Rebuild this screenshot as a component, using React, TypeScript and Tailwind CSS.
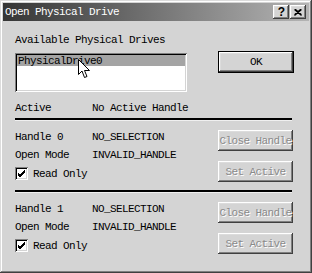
import React from "react";

const font = "font-['Liberation_Mono',monospace] text-[11px] tracking-[-0.6px] leading-[12px]";

const raised =
  "shadow-[inset_-1px_-1px_#404040,inset_1px_1px_#ffffff,inset_-2px_-2px_#808080,inset_2px_2px_#dcdcdc]";

const DisabledButton = ({ label, className = "" }: { label: string; className?: string }) => (
  <div
    className={`w-[75px] h-[21px] bg-[#d4d4d4] ${raised} flex items-center justify-center overflow-hidden whitespace-nowrap text-[#8a8a8a] [text-shadow:1px_1px_0_#ffffff] ${className}`}
  >
    {label}
  </div>
);

const CheckBox = () => (
  <div className="w-[13px] h-[13px] bg-white shadow-[inset_1px_1px_#808080,inset_-1px_-1px_#ffffff,inset_2px_2px_#000000,inset_-2px_-2px_#d4d4d4] flex items-center justify-center">
    <svg width="9" height="9" viewBox="0 0 9 9">
      <path d="M1 4 L3 6 L8 1 M1 5 L3 7 L8 2 M1 6 L3 8 L8 3" stroke="#000" strokeWidth="1" fill="none" />
    </svg>
  </div>
);

const HandleGroup = ({ index }: { index: number }) => (
  <div className="flex">
    <div className="flex flex-col pt-[10px]">
      <div className="flex">
        <span className="w-[77px]">Handle {index}</span>
        <span>NO_SELECTION</span>
      </div>
      <div className="flex mt-[6px]">
        <span className="w-[77px]">Open Mode</span>
        <span>INVALID_HANDLE</span>
      </div>
      <div className="flex items-center mt-[6px]">
        <CheckBox />
        <span className="ml-[5px]">Read Only</span>
      </div>
    </div>
    <div className="ml-auto mr-[16px] flex flex-col pt-[9px]">
      <DisabledButton label="Close Handle" />
      <DisabledButton label="Set Active" className="mt-[10px]" />
    </div>
  </div>
);

const App = () => {
  return (
    <div
      className={`relative w-[312px] h-[273px] bg-[#d4d4d4] p-[3px] text-black ${font} shadow-[inset_-1px_-1px_#404040,inset_1px_1px_#dcdcdc,inset_-2px_-2px_#808080,inset_2px_2px_#ffffff]`}
    >
      <div className="h-[18px] flex items-center pl-[2px] pr-[3px] bg-[linear-gradient(to_right,#353535,#b4b4b4)]">
        <span className="text-white">Open Physical Drive</span>
        <div className="ml-auto flex">
          <div className={`w-[16px] h-[14px] bg-[#d4d4d4] ${raised} flex items-center justify-center font-bold text-[12px] font-['Liberation_Sans',sans-serif]`}>
            ?
          </div>
          <div className={`ml-[1px] w-[16px] h-[14px] bg-[#d4d4d4] ${raised} flex items-center justify-center`}>
            <svg width="8" height="7" viewBox="0 0 8 7">
              <path d="M0.5 0.5 L7.5 6.5 M7.5 0.5 L0.5 6.5 M1.5 0.5 L7.5 5.8 M6.5 0.5 L0.5 5.8" stroke="#000" strokeWidth="1.2" fill="none" />
            </svg>
          </div>
        </div>
      </div>

      <div className="pl-[12px]">
        <div className="mt-[13px]">Available Physical Drives</div>

        <div className="flex items-start mt-[5px]">
          <div className="mt-[2px] w-[172px] h-[39px] bg-white shadow-[inset_1px_1px_#808080,inset_-1px_-1px_#ffffff,inset_2px_2px_#000000,inset_-2px_-2px_#d4d4d4] p-[2px]">
            <div className="h-[11px] bg-[#a4a4a4] flex items-center pl-[1px]">PhysicalDrive0</div>
          </div>
          <div className="ml-[31px] w-[76px] h-[22px] border border-black">
            <div className={`w-full h-full bg-[#d4d4d4] ${raised} flex items-center justify-center`}>OK</div>
          </div>
        </div>

        <div className="flex mt-[10px]">
          <span className="w-[77px]">Active</span>
          <span>No Active Handle</span>
        </div>

        <div className="mt-[4px] w-[277px] h-[3px] border-t-2 border-black border-b border-b-[#f0f0f0]" />
        <HandleGroup index={0} />

        <div className="mt-[8px] w-[277px] h-[3px] border-t-2 border-black border-b border-b-[#f0f0f0]" />
        <HandleGroup index={1} />
      </div>

      <svg className="absolute left-[78px] top-[59px]" width="12" height="20" viewBox="0 0 12 20">
        <path d="M0.5 0.5 L0.5 15.5 L4 12 L6.5 18.5 L9 17.5 L6.5 11.5 L11.5 11.5 Z" fill="#fff" stroke="#000" strokeWidth="1" />
      </svg>
    </div>
  );
};

export default App;
